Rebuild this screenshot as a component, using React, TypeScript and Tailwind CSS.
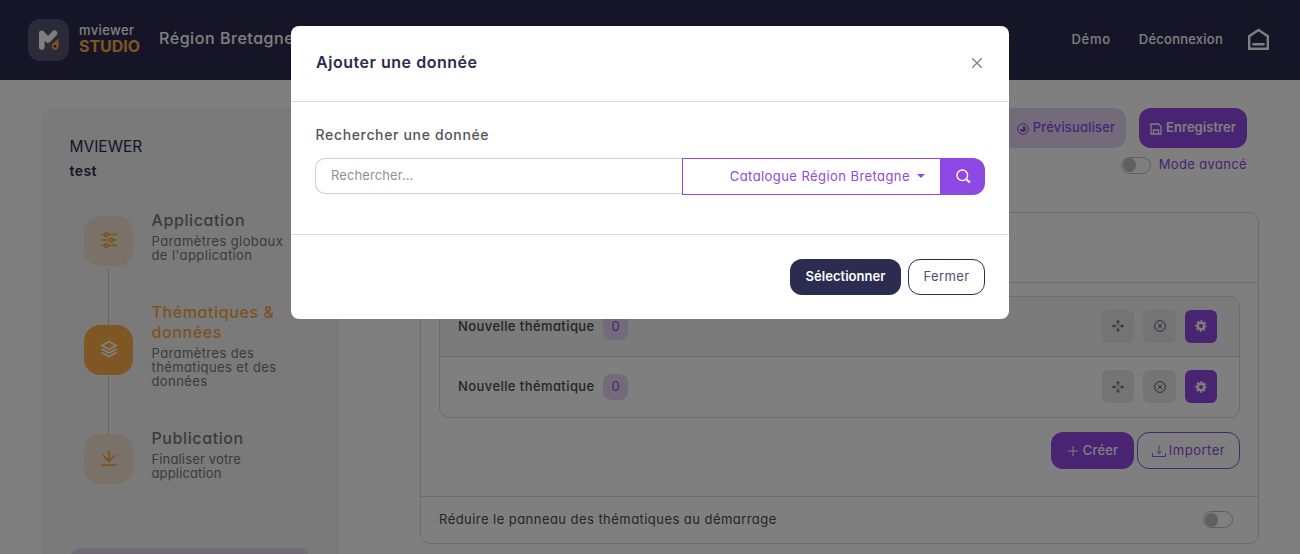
import React from "react";

const sans = "font-['Inter','Noto_Sans',sans-serif] [font-feature-settings:'cv11']";

function Logo() {
  return (
    <div className="flex h-[42px] w-[41px] shrink-0 items-center justify-center rounded-xl bg-white/20">
      <svg width="21" height="22" viewBox="0 0 21 22">
        <path d="M3.8 18V4.3L10 11l6.5-6.7" fill="none" stroke="#fff" strokeWidth="5.6" strokeLinecap="round" strokeLinejoin="round" />
        <path d="M20.5 9.7v7.6a3.4 3.4 0 1 1-5.7-2.5z" fill="#fbab46" />
        <circle cx="17" cy="17.3" r="1.4" fill="#2c2b50" />
      </svg>
    </div>
  );
}

function Sliders() {
  return (
    <svg width="18" height="18" viewBox="0 0 18 18" fill="none" stroke="#fba544" strokeWidth="1.7">
      <path d="M1 3.500h3.500M8 3.500h9M1 9h9M13 9h4M1 14.500h3.500M8 14.500h9" />
      <circle cx="6.300" cy="3.500" r="1.700" />
      <circle cx="11.500" cy="9" r="1.700" />
      <circle cx="6.300" cy="14.500" r="1.700" />
    </svg>
  );
}

function Layers() {
  return (
    <svg width="18" height="18" viewBox="0 0 18 18" fill="none" stroke="#fff" strokeWidth="1.8">
      <path d="M9 1.500 16 5.500 9 9.500 2 5.500z" />
      <path d="m1.500 9 7.500 4 7.500-4M1.500 12.500l7.500 4 7.500-4" />
    </svg>
  );
}

function Download() {
  return (
    <svg width="18" height="18" viewBox="0 0 18 18" fill="none" stroke="#fba544" strokeWidth="1.8">
      <path d="M9 1.500v11M2.800 6.200 9 12.400l6.200-6.200M1.500 16.200h15" />
    </svg>
  );
}

function Switch() {
  return (
    <span className="flex h-[17px] w-[30px] items-center rounded-full border border-[#bcbcbc] pl-px">
      <span className="h-[14px] w-[13px] rounded-full bg-[#bfbfbf]" />
    </span>
  );
}

type StepProps = {
  icon: React.ReactNode;
  title: React.ReactNode;
  children: React.ReactNode;
  active?: boolean;
  last?: boolean;
};

function Step({ icon, title, children, active, last }: StepProps) {
  return (
    <div className="flex h-[109px]">
      <div className="flex w-[49px] shrink-0 flex-col items-center pt-[29px]">
        <div className={`flex h-[50px] w-[49px] shrink-0 items-center justify-center rounded-2xl ${active ? "bg-[#ffae48]" : "bg-[#f5e5d2]"}`}>
          <div className="-mt-[2px]">{icon}</div>
        </div>
        {!last && <div className="mt-[2px] -mb-[29px] h-[57px] w-px shrink-0 border-l border-dotted border-[#e9993b]" />}
      </div>
      <div className={`ml-[18.500px] ${active ? "pt-[6px]" : "pt-[23px]"}`}>
        <div className={`text-[16px] leading-5 font-medium whitespace-nowrap tracking-[0.600px] ${active ? "text-[#f9a447]" : "text-[#777]"}`}>{title}</div>
        <div className={`mt-1 text-[13px] leading-[14px] whitespace-nowrap text-[#777] ${last ? "tracking-[0.150px]" : "tracking-[0.400px]"}`}>{children}</div>
      </div>
    </div>
  );
}

function MoveIcon() {
  return (
    <svg width="12" height="12" viewBox="0 0 12 12" fill="none" stroke="#333a45" strokeWidth="0.900">
      <path d="M6 4.400V.7M4.500 2.200 6 .7l1.500 1.500M6 7.600v3.700M4.500 9.800 6 11.300l1.500-1.500M4.400 6H.7M2.200 4.500.7 6l1.500 1.500M7.600 6h3.700M9.800 4.500 11.300 6 9.800 7.500" />
    </svg>
  );
}

function CrossCircle() {
  return (
    <svg width="12" height="12" viewBox="0 0 12 12" fill="none" stroke="#333a45" strokeWidth="0.800">
      <circle cx="6" cy="6" r="5.400" />
      <path d="m3.700 3.700 4.600 4.600M8.300 3.700 3.700 8.300" />
    </svg>
  );
}

function Gear() {
  return (
    <svg width="12" height="12" viewBox="0 0 12 12">
      <circle cx="6" cy="6" r="3.200" fill="none" stroke="#fff" strokeWidth="2.400" />
      <circle cx="6" cy="6" r="4.900" fill="none" stroke="#fff" strokeWidth="1.600" strokeDasharray="2.200 1.648" strokeDashoffset="1.100" />
    </svg>
  );
}

function ThemeRow({ shaded }: { shaded?: boolean }) {
  return (
    <div className={`flex h-[60px] items-center pr-[22px] pl-[18px] ${shaded ? "rounded-t-[9px] border-b border-[#dadada] bg-[#f6f6f6]" : ""}`}>
      <span className="w-[137px] text-[13px] font-medium whitespace-nowrap tracking-[0.420px] text-[#4b4b4b]">Nouvelle thématique</span>
      <span className="ml-2 flex h-[26px] w-[25px] items-center justify-center rounded-lg bg-[#e6d7f5] text-[13px] text-[#9048e4]">0</span>
      <div className="-mt-px ml-auto flex gap-[9px]">
        <span className="flex h-[33px] w-8 items-center justify-center rounded-md bg-[#e9e9e9]"><MoveIcon /></span>
        <span className="flex h-[33px] w-[33px] items-center justify-center rounded-md bg-[#e9e9e9]"><CrossCircle /></span>
        <span className="flex h-[33px] w-8 items-center justify-center rounded-md bg-[#9048e4]"><Gear /></span>
      </div>
    </div>
  );
}

function Header() {
  return (
    <header className="flex h-20 items-center bg-[#2c2b50] pr-[30px] pl-7 text-white">
      <Logo />
      <div className="ml-[10px] -mt-[2px] w-[63px] whitespace-nowrap">
        <div className="text-[13px] leading-[15px] font-medium tracking-[0.400px]">mviewer</div>
        <div className="text-[16px] leading-[17px] font-bold tracking-[-0.050px] text-[#fbab46]">STUDIO</div>
      </div>
      <div className="-mt-[4px] ml-[17px] text-[16px] font-medium whitespace-nowrap tracking-[0.550px]">Région Bretagne</div>
      <nav className="ml-auto flex items-center text-[13px] font-medium">
        <span className="tracking-[0.750px]">Démo</span>
        <span className="ml-[28px] tracking-[0.240px]">Déconnexion</span>
        <svg className="-mt-px ml-[24px]" width="23" height="23" viewBox="0 0 23 23" fill="none" stroke="#fff" strokeWidth="2.400">
          <path d="M2.200 20.800V8.200l9.300-6.300 9.300 6.300v12.600zM5.500 16.200h12" />
        </svg>
      </nav>
    </header>
  );
}

function Sidebar() {
  return (
    <aside className="flex h-[600px] w-[298px] shrink-0 flex-col rounded-xl bg-[#f4f4f4] px-[28.500px] pt-[28px]">
      <div className="text-[15.500px] leading-[22px] text-[#2c2b50]">MVIEWER</div>
      <div className="mt-[2px] text-[14px] leading-[22px] font-semibold tracking-[0.400px] text-[#2c2b50]">test</div>
      <div className="mt-[5px] h-[361px] pl-[14.500px]">
        <Step icon={<Sliders />} title="Application">Paramètres globaux<br />de l'application</Step>
        <Step icon={<Layers />} title={<>Thématiques &amp;<br />données</>} active>Paramètres des<br />thématiques et des<br />données</Step>
        <Step icon={<Download />} title="Publication" last>Finaliser votre<br />application</Step>
      </div>
      <div className="h-[60px] w-[240px] rounded-xl bg-[#e4d5ee]" />
    </aside>
  );
}

function Content() {
  return (
    <main className="ml-[81px] w-[839px]">
      <div className="flex h-[104px] flex-col items-end pr-3">
        <div className="flex gap-[13px]">
          <button className="flex h-10 w-[126px] items-center justify-center gap-1 rounded-xl bg-[#e6d7f5] pl-1.5 text-[13px] font-medium whitespace-nowrap text-[#9048e4]">
            <svg className="mt-px" width="12" height="12" viewBox="0 0 12 12" fill="none" stroke="#9048e4">
              <circle cx="6" cy="6" r="5.300" />
              <path d="M6 3a3 3 0 1 1-3 3h3z" fill="#9048e4" stroke="none" />
            </svg>
            <span className="tracking-[0.170px]">Prévisualiser</span>
          </button>
          <button className="flex h-10 w-[108px] items-center justify-center gap-1 rounded-xl bg-[#9048e4] text-[13px] font-semibold whitespace-nowrap text-white">
            <svg className="mt-px" width="12" height="12" viewBox="0 0 12 12" fill="none" stroke="#fff" strokeWidth="1.300">
              <path d="M1 1h7.500L11 3.500V11H1zM3.500 11V7h5v4" />
            </svg>
            <span className="tracking-[0.050px]">Enregistrer</span>
          </button>
        </div>
        <div className="mt-[7px] flex items-center gap-2 text-[13px] text-[#9048e4]">
          <span className="pt-px"><Switch /></span>
          <span className="tracking-[0.350px]">Mode avancé</span>
        </div>
      </div>
      <section className="h-[332px] rounded-[10px] border border-[#dadada]">
        <div className="h-[70px] border-b border-[#dadada]" />
        <div className="h-[214px] border-b border-[#dadada] px-[18px] pt-[13px]">
          <div className="h-[122px] rounded-[10px] border border-[#dadada]">
            <ThemeRow shaded />
            <ThemeRow />
          </div>
          <div className="mt-[14px] flex justify-end gap-[3px] text-[13px]">
            <button className="flex h-[37px] w-[83px] items-center justify-center gap-[5px] rounded-xl bg-[#9048e4] pl-px font-medium text-white">
              <svg width="10" height="10" viewBox="0 0 10 10" stroke="#fff"><path d="M5 0v10M0 5h10" /></svg>
              <span className="tracking-[0.200px]">Créer</span>
            </button>
            <button className="flex h-[37px] w-[103px] items-center justify-center gap-[3px] rounded-xl border border-[#9048e4] text-[#9048e4]">
              <svg width="14" height="12" viewBox="0 0 14 12" fill="none" stroke="#9048e4" strokeWidth="0.900">
                <path d="M.5 8v3.500h13V8M7 .5v8M4.500 6 7 8.500 9.500 6" />
              </svg>
              <span className="tracking-[0.520px]">Importer</span>
            </button>
          </div>
        </div>
        <div className="flex h-[45px] items-center justify-between pr-[25px] pl-[18px] text-[13px] text-[#4b4b4b]">
          <span className="tracking-[0.450px]">Réduire le panneau des thématiques au démarrage</span>
          <Switch />
        </div>
      </section>
    </main>
  );
}

function Modal() {
  return (
    <div className="fixed inset-0 flex items-start justify-center bg-black/50 pt-[26px]">
      <div role="dialog" className="h-[293px] w-[718px] rounded-lg bg-white">
        <div className="flex h-[76px] items-center justify-between border-b border-[#dcdcdc] pr-[27px] pl-[25px]">
          <h2 className="-mt-[4px] text-[16px] font-semibold tracking-[0.530px] text-[#2c2b50]">Ajouter une donnée</h2>
          <svg className="-mt-[2px]" width="10" height="10" viewBox="0 0 10 10" stroke="#858585" strokeWidth="1.400"><path d="m0 0 10 10M10 0 0 10" /></svg>
        </div>
        <div className="h-[133px] border-b border-[#dcdcdc] px-6 pt-[22px]">
          <div className="pl-[0.500px] text-[14px] leading-[22px] font-medium tracking-[0.650px] text-[#555]">Rechercher une donnée</div>
          <div className="mt-[12px] flex">
            <input className="h-9 w-[367px] rounded-l-[10px] border border-r-0 border-[#cfcfcf] px-[15px] pb-[2px] text-[13px] tracking-[0.100px] outline-none placeholder:text-[#929292]" placeholder="Rechercher..." />
            <button className="flex h-[37px] w-[259px] items-center justify-end gap-[7px] border border-[#9048e4] pr-[15px] text-[13px] whitespace-nowrap text-[#9048e4]">
              <span className="tracking-[0.430px]">Catalogue Région Bretagne</span>
              <span className="-mt-[2px] border-x-[4px] border-t-[4px] border-x-transparent border-t-[#9048e4]" />
            </button>
            <button className="flex h-[37px] w-11 items-center justify-center rounded-r-xl bg-[#9048e4]">
              <svg width="15" height="15" viewBox="0 0 15 15" fill="none" stroke="#fff" strokeWidth="1.400">
                <circle cx="6.300" cy="6.300" r="5.300" />
                <path d="m10.400 10.400 3.600 3" strokeWidth="2" />
              </svg>
            </button>
          </div>
        </div>
        <div className="flex justify-end gap-[7px] pt-6 pr-6 text-[13px]">
          <button className="h-9 w-[111px] rounded-xl bg-[#2c2b50] font-semibold tracking-[0.050px] text-white">Sélectionner</button>
          <button className="h-9 w-[77px] rounded-xl border border-[#2c2b50] tracking-[0.350px] text-[#50506d]">Fermer</button>
        </div>
      </div>
    </div>
  );
}

export default function App() {
  return (
    <div className={`h-[554px] w-[1300px] overflow-hidden bg-white ${sans}`}>
      <Header />
      <div className="flex pt-7 pl-[41px]">
        <Sidebar />
        <Content />
      </div>
      <Modal />
    </div>
  );
}
